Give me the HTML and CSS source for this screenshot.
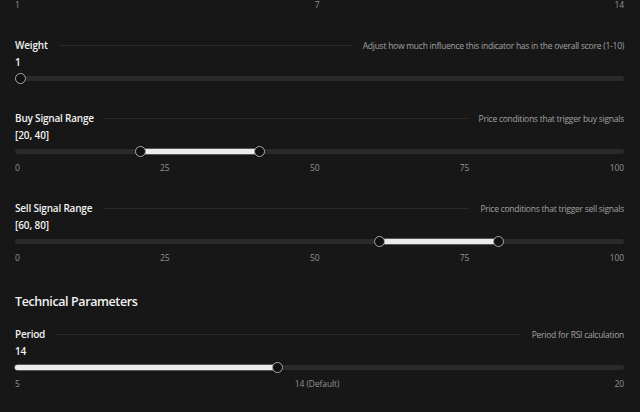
FILE: index.html
```html
<!DOCTYPE html>
<html lang="en">
<head>
<meta charset="utf-8">
<title>Indicator settings</title>
<link rel="stylesheet" href="styles.css">
</head>
<body>
<div class="page">
  <div class="ticks ticks-top"><span>1</span><span>7</span><span>14</span></div>

  <div class="field">
    <div class="field-head">
      <span class="label">Weight</span>
      <span class="rule"></span>
      <span class="desc">Adjust how much influence this indicator has in the overall score (1-10)</span>
    </div>
    <div class="value">1</div>
    <div class="slider">
      <div class="track"></div>
      <div class="thumb" style="--p:0"></div>
    </div>
  </div>

  <div class="field">
    <div class="field-head">
      <span class="label">Buy Signal Range</span>
      <span class="rule"></span>
      <span class="desc">Price conditions that trigger buy signals</span>
    </div>
    <div class="value">[20, 40]</div>
    <div class="slider">
      <div class="track"></div>
      <div class="fill" style="--a:0.2;--b:0.4"></div>
      <div class="thumb" style="--p:0.2"></div>
      <div class="thumb" style="--p:0.4"></div>
    </div>
    <div class="ticks"><span>0</span><span>25</span><span>50</span><span>75</span><span>100</span></div>
  </div>

  <div class="field">
    <div class="field-head">
      <span class="label">Sell Signal Range</span>
      <span class="rule"></span>
      <span class="desc">Price conditions that trigger sell signals</span>
    </div>
    <div class="value">[60, 80]</div>
    <div class="slider">
      <div class="track"></div>
      <div class="fill" style="--a:0.6;--b:0.8"></div>
      <div class="thumb" style="--p:0.6"></div>
      <div class="thumb" style="--p:0.8"></div>
    </div>
    <div class="ticks"><span>0</span><span>25</span><span>50</span><span>75</span><span>100</span></div>
  </div>

  <h2 class="section-title">Technical Parameters</h2>

  <div class="field">
    <div class="field-head">
      <span class="label">Period</span>
      <span class="rule"></span>
      <span class="desc">Period for RSI calculation</span>
    </div>
    <div class="value">14</div>
    <div class="slider">
      <div class="track"></div>
      <div class="fill fill-start" style="--b:0.4296"></div>
      <div class="thumb" style="--p:0.4296"></div>
    </div>
    <div class="ticks"><span>5</span><span>14 (Default)</span><span>20</span></div>
  </div>
</div>
</body>
</html>
```

FILE: styles.css
```css
* { box-sizing: border-box; }

html, body {
  margin: 0;
  padding: 0;
  background: #171717;
  height: 100%;
  overflow: hidden;
}

body {
  font-family: "Open Sans", "Noto Sans", sans-serif;
  color: #ededed;
}

.page {
  padding: 0 16px 0 15px;
}

.ticks {
  display: flex;
  justify-content: space-between;
  align-items: center;
  height: 17px;
  font-size: 8.5px;
  letter-spacing: -0.1px;
  color: #929292;
}

.ticks-top {
  margin-top: -4px;
}

.field {
  margin-top: 24px;
}

.field-head {
  display: flex;
  align-items: center;
  height: 16px;
}

.label {
  font-size: 10px;
  font-weight: 600;
  letter-spacing: -0.2px;
  color: #f2f2f2;
  white-space: nowrap;
}

.rule {
  flex: 1;
  height: 1px;
  background: #2b2b2b;
  margin: 0 11px;
}

.desc {
  font-size: 8.5px;
  letter-spacing: -0.25px;
  color: #a2a2a2;
  white-space: nowrap;
}

.value {
  height: 17px;
  display: flex;
  align-items: center;
  font-size: 10px;
  font-weight: 600;
  letter-spacing: -0.1px;
  color: #f2f2f2;
}

.slider {
  position: relative;
  height: 16px;
}

.track {
  position: absolute;
  left: 0;
  right: 0;
  top: 6px;
  height: 5px;
  border-radius: 3px;
  background: #2a2a2a;
}

.fill {
  position: absolute;
  top: 6px;
  height: 5px;
  left: calc(5.5px + var(--a) * (100% - 11px));
  width: calc((var(--b) - var(--a)) * (100% - 11px));
  background: #ececec;
  box-shadow: 0 0 0 0.5px #9a9a9a;
}

.fill-start {
  left: 0;
  width: calc(5.5px + var(--b) * (100% - 11px));
  border-radius: 3px 0 0 3px;
}

.thumb {
  position: absolute;
  top: 2.5px;
  left: calc(var(--p) * (100% - 11px));
  width: 11px;
  height: 11px;
  border-radius: 50%;
  background: #111;
  border: 1.5px solid #a8a8a8;
}

.section-title {
  margin: 26px 0 14px;
  height: 20px;
  line-height: 20px;
  font-size: 12.5px;
  font-weight: 600;
  letter-spacing: -0.4px;
  color: #f2f2f2;
}

.section-title + .field {
  margin-top: 0;
}
```
